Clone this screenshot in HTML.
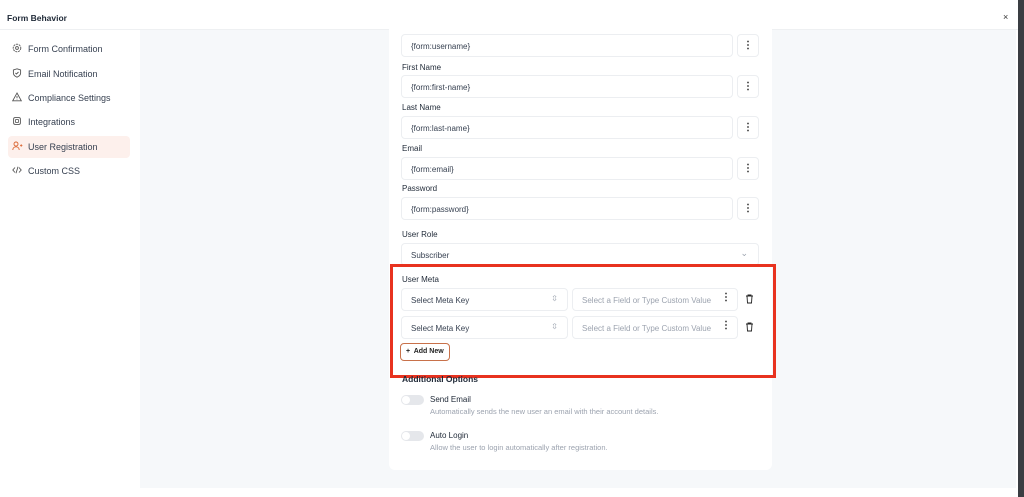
<!DOCTYPE html>
<html><head><style>
*{box-sizing:border-box;margin:0;padding:0}
body{width:1024px;height:497px;overflow:hidden;background:#fff;font-family:"Liberation Sans",sans-serif;position:relative}
.a{position:absolute}
.t{font-size:8px;color:#1f2937}
.lbl{font-size:8px;color:#1f2937;position:absolute;left:402px}
.inp{position:absolute;left:401px;width:332px;height:23px;border:1px solid #eceef1;border-radius:4px;background:#fff;font-size:8px;color:#374151;padding:7px 9px}
.dots{position:absolute;left:737px;width:22px;height:23px;border:1px solid #eceef1;border-radius:4px;background:#fff;font-size:10px;font-weight:bold;text-align:center;line-height:21px;color:#222}
.nav{position:absolute;left:8px;width:122px;height:22px;font-size:9px;color:#374151;padding:6px 0 0 20px;border-radius:4px}
.nav svg{position:absolute;left:4px;top:5px}
.tog{position:absolute;left:401px;width:23px;height:10px;border-radius:5px;background:#e5e7eb}
.tog:after{content:"";position:absolute;left:1px;top:1px;width:8px;height:8px;border-radius:50%;background:#fff}
.sm{font-size:7.5px;color:#9ca3af;position:absolute;left:430px}
</style></head><body>
<div class="a" style="left:1018px;top:0;width:6px;height:497px;background:#3a3d42"></div>
<div class="a" style="left:0;top:0;width:1018px;height:30px;border-bottom:1px solid #eef0f2"></div>
<div class="a t" style="left:7px;top:13px;font-weight:bold;font-size:8.5px">Form Behavior</div>
<div class="a" style="left:1003px;top:12px;font-size:9px;color:#333">×</div>
<div class="a" style="left:140px;top:30px;width:876px;height:458px;background:#f6f8fa"></div>
<div class="a" style="left:389px;top:24px;width:383px;height:446px;background:#fff;border-radius:6px"></div>

<div class="nav" style="top:38px"><svg width="10" height="10" viewBox="0 0 10 10"><circle cx="5" cy="5" r="3.8" fill="none" stroke="#555" stroke-width=".9" stroke-dasharray="2 .8"/><circle cx="5" cy="5" r="1.4" fill="none" stroke="#555" stroke-width=".9"/></svg>Form Confirmation</div>
<div class="nav" style="top:63px"><svg width="10" height="10" viewBox="0 0 10 10"><path d="M5 .8L8.6 2v3c0 2-1.6 3.4-3.6 4.2C3 8.4 1.4 7 1.4 5V2z" fill="none" stroke="#555" stroke-width=".9"/><path d="M3.4 5l1.1 1 2-2" fill="none" stroke="#555" stroke-width=".9"/></svg>Email Notification</div>
<div class="nav" style="top:87px"><svg width="10" height="10" viewBox="0 0 10 10"><path d="M5 1L9.3 8.8H.7z" fill="none" stroke="#555" stroke-width=".9"/><path d="M5 4v2.2M5 7.2v.4" stroke="#555" stroke-width=".9"/></svg>Compliance Settings</div>
<div class="nav" style="top:111px"><svg width="10" height="10" viewBox="0 0 10 10"><rect x="1.6" y="1.6" width="6.8" height="6.8" rx="1.5" fill="none" stroke="#555" stroke-width=".9"/><rect x="3.6" y="3.6" width="2.8" height="2.8" fill="none" stroke="#555" stroke-width=".8"/></svg>Integrations</div>
<div class="nav" style="top:136px;background:#fdf0ec"><svg width="11" height="10" viewBox="0 0 11 10"><circle cx="4" cy="3" r="2" fill="none" stroke="#d9622e" stroke-width=".9"/><path d="M.8 9c0-2 1.4-3.2 3.2-3.2S7.2 7 7.2 9" fill="none" stroke="#d9622e" stroke-width=".9"/><path d="M8 4.5h2.4M9.2 3.3v2.4" stroke="#d9622e" stroke-width=".8"/></svg>User Registration</div>
<div class="nav" style="top:160px"><svg width="10" height="10" viewBox="0 0 10 10"><path d="M3 2.5L.8 5 3 7.5M7 2.5L9.2 5 7 7.5M6 1.8L4 8.2" fill="none" stroke="#555" stroke-width=".9"/></svg>Custom CSS</div>

<div class="inp" style="top:34px">{form:username}</div><div class="dots" style="top:34px">⋮</div>
<div class="lbl" style="top:63px">First Name</div>
<div class="inp" style="top:75px">{form:first-name}</div><div class="dots" style="top:75px">⋮</div>
<div class="lbl" style="top:103px">Last Name</div>
<div class="inp" style="top:116px">{form:last-name}</div><div class="dots" style="top:116px">⋮</div>
<div class="lbl" style="top:144px">Email</div>
<div class="inp" style="top:157px">{form:email}</div><div class="dots" style="top:157px">⋮</div>
<div class="lbl" style="top:184px">Password</div>
<div class="inp" style="top:197px">{form:password}</div><div class="dots" style="top:197px">⋮</div>
<div class="lbl" style="top:230px">User Role</div>
<div class="inp" style="top:243px;width:358px">Subscriber<span style="position:absolute;right:10px;top:4px;color:#9ca3af;font-size:9px">⌄</span></div>

<div class="lbl" style="top:275px">User Meta</div>
<div class="inp" style="top:288px;left:401px;width:167px">Select Meta Key<span style="position:absolute;right:9px;top:5px;color:#9ca3af;font-size:8px">⇳</span></div>
<div class="inp" style="top:288px;left:572px;width:166px;color:#9ca3af">Select a Field or Type Custom Value<span style="position:absolute;right:6px;top:3px;color:#222;font-weight:bold;font-size:10px">⋮</span></div>
<svg class="a" style="left:745px;top:294px" width="9" height="10" viewBox="0 0 9 10"><path d="M1 2h7M3 2V1h3v1M2 2l.5 7h4L7 2" fill="none" stroke="#222" stroke-width=".9"/></svg>
<div class="inp" style="top:316px;left:401px;width:167px">Select Meta Key<span style="position:absolute;right:9px;top:5px;color:#9ca3af;font-size:8px">⇳</span></div>
<div class="inp" style="top:316px;left:572px;width:166px;color:#9ca3af">Select a Field or Type Custom Value<span style="position:absolute;right:6px;top:3px;color:#222;font-weight:bold;font-size:10px">⋮</span></div>
<svg class="a" style="left:745px;top:322px" width="9" height="10" viewBox="0 0 9 10"><path d="M1 2h7M3 2V1h3v1M2 2l.5 7h4L7 2" fill="none" stroke="#222" stroke-width=".9"/></svg>
<div class="a" style="left:400px;top:343px;width:50px;height:18px;border:1.3px solid #c8714a;border-radius:4px;font-size:7px;font-weight:bold;color:#222;padding:4px 0 0 5px">+&nbsp; Add New</div>
<div class="a" style="left:390px;top:264px;width:386px;height:114px;border:3px solid #e8321f"></div>

<div class="lbl" style="top:374px;font-weight:bold;font-size:8.5px">Additional Options</div>
<div class="tog" style="top:395px"></div>
<div class="a t" style="left:430px;top:395px;font-size:8px">Send Email</div>
<div class="sm" style="top:407px">Automatically sends the new user an email with their account details.</div>
<div class="tog" style="top:431px"></div>
<div class="a t" style="left:430px;top:431px;font-size:8px">Auto Login</div>
<div class="sm" style="top:443px">Allow the user to login automatically after registration.</div>
</body></html>
